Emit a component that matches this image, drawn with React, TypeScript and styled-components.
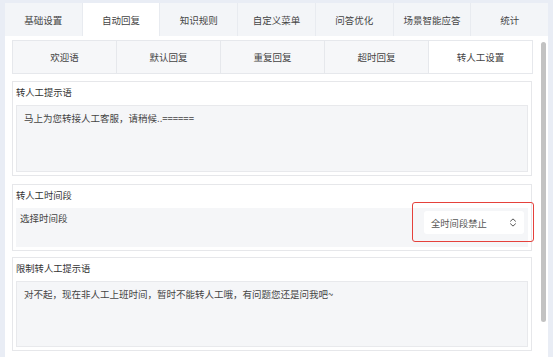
import React from "react";
import styled, { createGlobalStyle } from "styled-components";

const Global = createGlobalStyle`
  html, body { margin: 0; padding: 0; }
  body {
    background: #e9edf5;
    font-family: "Noto Sans CJK SC", "Noto Sans", sans-serif;
    color: #333;
    overflow: hidden;
  }
`;

const Page = styled.div`
  width: 553px;
  height: 357px;
  box-sizing: border-box;
  padding: 3px 5px 0 5px;
  display: flex;
  flex-direction: column;
`;

const TabBar = styled.div`
  display: flex;
  height: 33px;
  flex-shrink: 0;
`;

const Tab = styled.div<{ $active?: boolean }>`
  flex: 1;
  display: flex;
  align-items: center;
  justify-content: center;
  font-size: 9.5px;
  color: #444;
  background: ${(p) => (p.$active ? "#ffffff" : "#f3f5f8")};
  border-right: 1px solid #e8ebf0;
  &:last-child { border-right: none; }
`;

const Panel = styled.div`
  flex: 1;
  background: #fff;
  display: flex;
  padding: 4px 2px 0 7px;
  min-height: 0;
`;

const Main = styled.div`
  width: 521px;
  flex-shrink: 0;
  display: flex;
  flex-direction: column;
`;

const SubTabs = styled.div`
  display: flex;
  height: 34px;
  border: 1px solid #e6e8ec;
  box-sizing: border-box;
  flex-shrink: 0;
`;

const SubTab = styled.div<{ $active?: boolean }>`
  flex: 1;
  display: flex;
  align-items: center;
  justify-content: center;
  font-size: 9.5px;
  color: #444;
  background: ${(p) => (p.$active ? "#ffffff" : "#f6f7f9")};
  border-right: 1px solid #e6e8ec;
  &:last-child { border-right: none; }
`;

const Card = styled.div<{ $mt: number }>`
  margin-top: ${(p) => p.$mt}px;
  margin-right: 1px;
  border: 1px solid #e6e7ea;
  padding: 0 3px 3px 3px;
  display: flex;
  flex-direction: column;
  flex-shrink: 0;
`;

const CardTitle = styled.div`
  height: 23px;
  line-height: 21px;
  font-size: 9.3px;
  color: #333;
`;

const TextBox = styled.div<{ $h: number }>`
  height: ${(p) => p.$h}px;
  box-sizing: border-box;
  background: #f5f6f8;
  border: 1px solid #e8e9ec;
  padding: 4px 7px;
  font-size: 9.5px;
  line-height: 16px;
  color: #444;
`;

const TimeRow = styled.div`
  height: 39px;
  box-sizing: border-box;
  background: #f5f6f8;
  display: flex;
  justify-content: space-between;
  align-items: flex-start;
  padding: 2px 4px 0 4px;
  font-size: 9.5px;
  color: #444;
`;

const RowLabel = styled.div`
  line-height: 16px;
`;

const SelectWrap = styled.div`
  position: relative;
  margin-top: 1px;
`;

const Select = styled.div`
  width: 100px;
  height: 23px;
  box-sizing: border-box;
  background: #fff;
  border-radius: 3px;
  display: flex;
  align-items: center;
  justify-content: space-between;
  padding: 0 7px;
  font-size: 9.3px;
  color: #555;
`;

const Highlight = styled.div`
  position: absolute;
  left: -12px;
  top: -9px;
  right: -10px;
  bottom: -8px;
  border: 1.5px solid #e5413b;
  border-radius: 3px;
  pointer-events: none;
`;

const ScrollTrack = styled.div`
  width: 7px;
  flex-shrink: 0;
  margin-left: 6px;
  display: flex;
  justify-content: flex-end;
  padding-top: 2px;
`;

const ScrollThumb = styled.div`
  width: 5px;
  height: 280px;
  background: #c2c2c2;
  border-radius: 3px;
`;

const topTabs = ["基础设置", "自动回复", "知识规则", "自定义菜单", "问答优化", "场景智能应答", "统计"];
const subTabs = ["欢迎语", "默认回复", "重复回复", "超时回复", "转人工设置"];

const UpDown = () => (
  <svg width="8" height="9" viewBox="0 0 8 9" fill="none" stroke="#555" strokeWidth="1" strokeLinecap="round" strokeLinejoin="round">
    <path d="M1.5 3.2 L4 0.9 L6.5 3.2" />
    <path d="M1.5 5.8 L4 8.1 L6.5 5.8" />
  </svg>
);

export default function App() {
  return (
    <>
      <Global />
      <Page>
        <TabBar>
          {topTabs.map((t, i) => (
            <Tab key={t} $active={i === 1}>{t}</Tab>
          ))}
        </TabBar>
        <Panel>
          <Main>
            <SubTabs>
              {subTabs.map((t, i) => (
                <SubTab key={t} $active={i === 4}>{t}</SubTab>
              ))}
            </SubTabs>
            <Card $mt={7}>
              <CardTitle>转人工提示语</CardTitle>
              <TextBox $h={67}>马上为您转接人工客服，请稍候..======</TextBox>
            </Card>
            <Card $mt={8}>
              <CardTitle>转人工时间段</CardTitle>
              <TimeRow>
                <RowLabel>选择时间段</RowLabel>
                <SelectWrap>
                  <Select>
                    <span>全时间段禁止</span>
                    <UpDown />
                  </Select>
                  <Highlight />
                </SelectWrap>
              </TimeRow>
            </Card>
            <Card $mt={6}>
              <CardTitle>限制转人工提示语</CardTitle>
              <TextBox $h={66}>对不起，现在非人工上班时间，暂时不能转人工哦，有问题您还是问我吧~</TextBox>
            </Card>
          </Main>
          <ScrollTrack>
            <ScrollThumb />
          </ScrollTrack>
        </Panel>
      </Page>
    </>
  );
}
